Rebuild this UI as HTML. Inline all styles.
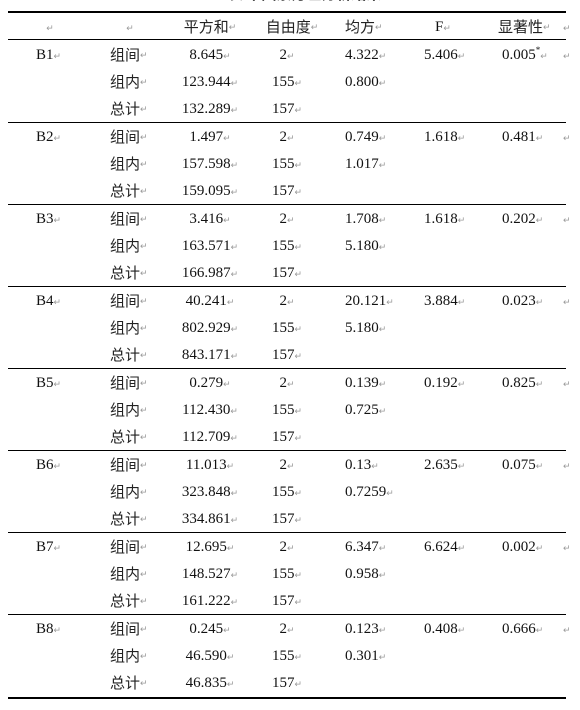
<!DOCTYPE html><html><head><meta charset="utf-8"><style>
body{margin:0;width:580px;height:710px;background:#fff;position:relative;overflow:hidden;font-family:"Liberation Serif","Noto Serif CJK SC",serif;font-size:15px;color:#111}
.t{position:absolute;white-space:nowrap;line-height:16px;height:16px}
.c{transform:translateX(-50%)}
.r{color:#999;font-size:9px;font-family:"Liberation Sans",sans-serif}
.h{position:absolute;left:8px;width:558px;background:#000}
.cj{font-family:"WenQuanYi Zen Hei","Noto Sans CJK SC",sans-serif;font-size:15px;color:#222}
.cj .r{vertical-align:top}
</style></head><body>
<div class="t" style="left:228px;top:-14px;font-weight:bold;font-family:'Noto Sans CJK SC',sans-serif">表 单因素方差分析结果</div>
<div class="h" style="top:11px;height:2px"></div>
<div class="h" style="top:39px;height:1px"></div>
<div id="m"></div>
<script>
var d=[["B1","8.645","123.944","132.289","4.322","0.800","5.406","0.005*"],
["B2","1.497","157.598","159.095","0.749","1.017","1.618","0.481"],
["B3","3.416","163.571","166.987","1.708","5.180","1.618","0.202"],
["B4","40.241","802.929","843.171","20.121","5.180","3.884","0.023"],
["B5","0.279","112.430","112.709","0.139","0.725","0.192","0.825"],
["B6","11.013","323.848","334.861","0.13","0.7259","2.635","0.075"],
["B7","12.695","148.527","161.222","6.347","0.958","6.624","0.002"],
["B8","0.245","46.590","46.835","0.123","0.301","0.408","0.666"]];
var h="",R='<span class="r">↵</span>';
function t(x,y,s,c,cls){h+='<div class="t '+(c?'c ':'')+(cls||'')+'" style="left:'+x+'px;top:'+(y-8)+'px">'+s+R+'</div>';}
t(50,27,"",1);t(130,27,"",1);t(210,27,"平方和",1,"cj");t(292,27,"自由度",1,"cj");t(345,27,"均方",0,"cj");t(443,27,"F",1);t(498,27,"显著性",0,"cj");
h+='<div class="t r" style="left:563px;top:20px">↵</div>';
d.forEach(function(g,i){var y=55+82*i;
t(36,y,g[0]);
["组间","组内","总计"].forEach(function(n,j){t(110,y+27*j,n,0,"cj");});
for(var j=0;j<3;j++){t(210,y+27*j,g[1+j],1);t(287,y+27*j,["2","155","157"][j],1);}
t(345,y,g[4]);t(345,y+27,g[5]);t(424,y,g[6]);
t(502,y,g[7].replace("*","<span style='font-size:9px;position:relative;top:-6px'>*</span>"));
h+='<div class="t r" style="left:563px;top:'+(y-7)+'px">↵</div>';
if(i<7)h+='<div class="h" style="top:'+(y+67)+'px;height:1px"></div>';
});
h+='<div class="h" style="top:697px;height:2px"></div>';
document.getElementById("m").innerHTML=h;
</script></body></html>
